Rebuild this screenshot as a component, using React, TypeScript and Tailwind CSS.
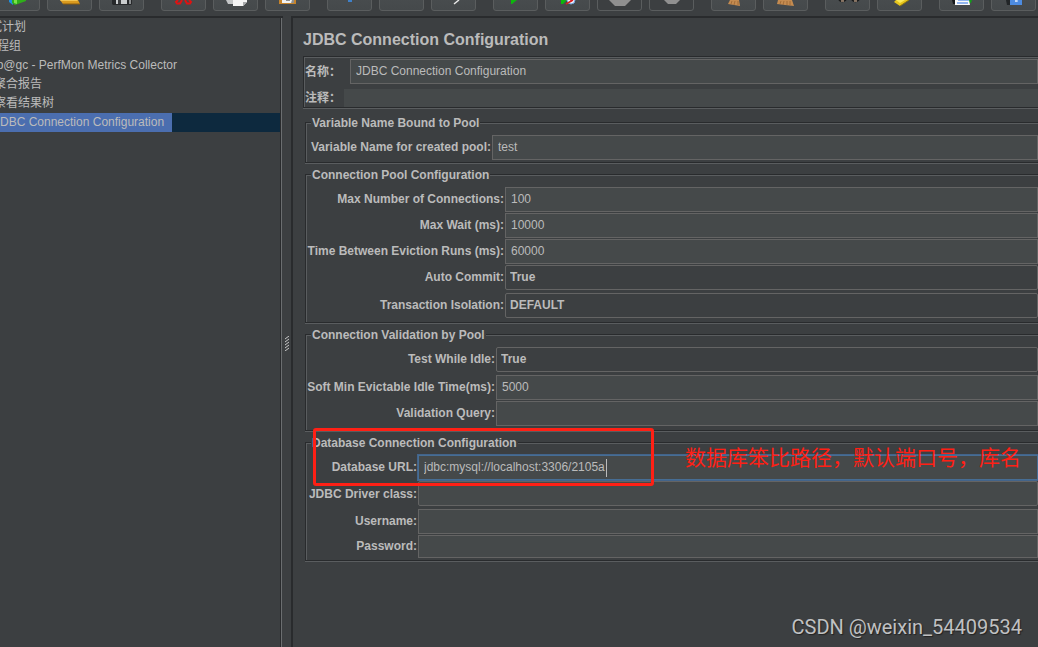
import React from 'react';
import { clsx } from 'clsx';

const FONT = "font-['Liberation_Sans','Noto_Sans_CJK_SC',sans-serif]";
const FIELD = 'w-full border border-[#646464] bg-[#45494a] pb-0.5 pl-[5px] text-[#bbbbbb] outline-none';
const LABEL = 'self-center justify-self-end pb-px whitespace-nowrap font-bold';
const ETCHED = 'border border-r-0 border-[#292b2d] shadow-[inset_1px_1px_0_#5a5d5f,0_1px_0_#5a5d5f]';

interface Tool {
    name: string;
    disabled?: boolean;
    art?: React.ReactNode;
}

const toolGroups: Tool[][] = [
    [
        {
            name: 'Templates',
            art: (
                <>
                    <path d="M13 0h4v5l-4-3z" fill="#1d8fe0" />
                    <path d="M16 0h14v1l-11 4-3-2z" fill="#2fae1a" />
                    <path d="M18 0h3v4l-3-1z" fill="#7be04a" />
                </>
            ),
        },
        {
            name: 'Open',
            art: (
                <>
                    <path d="M12 0h18l2 4H15z" fill="#d99a1e" />
                    <path d="M12 0h17l1 1H13z" fill="#f3c552" />
                    <path d="M15 4h17" stroke="#8a5a0c" />
                </>
            ),
        },
        {
            name: 'Save',
            art: (
                <>
                    <path d="M12 0h20v4l-1 1H13l-1-1z" fill="#26282a" />
                    <path d="M16 0h11v4H16z" fill="#c9cccd" />
                    <path d="M18 0h3v4h-3z" fill="#3a3c3e" />
                    <path d="M29 0h2v4h-2z" fill="#8b8e90" />
                </>
            ),
        },
    ],
    [
        {
            name: 'Cut',
            art: (
                <g fill="none" stroke="#e01212" strokeWidth="2">
                    <path d="M20 0l-2 3.500h-3L14 2l2-2" />
                    <path d="M23 0l2 3.500h3L29 2l-2-2" />
                </g>
            ),
        },
        {
            name: 'Copy',
            art: (
                <>
                    <path d="M12 0h12v4H14z" fill="#c4c6c7" />
                    <path d="M19 0h14v2l-4 4H19z" fill="#f4f4f4" />
                    <path d="M29 6V2h4z" fill="#a9abac" />
                </>
            ),
        },
        {
            name: 'Paste',
            art: (
                <>
                    <path d="M13 0h17v4H13z" fill="#c5832b" />
                    <path d="M16 0h11v3H16z" fill="#f1f1f1" />
                    <path d="M20 0h4v1h-4zM26 0h2v3h-3z" fill="#8d8f90" />
                </>
            ),
        },
    ],
    [
        { name: 'Expand All', art: <path d="M20 0h4v2h-4z" fill="#3f80c8" /> },
        { name: 'Collapse All' },
        { name: 'Toggle', art: <path d="M27 0l-5 4" stroke="#e8e8e8" strokeWidth="1.500" /> },
    ],
    [
        { name: 'Start', art: <path d="M17 0h6l-5 4h-1z" fill="#0cb80c" /> },
        {
            name: 'Start no pauses',
            art: (
                <>
                    <path d="M15 0h6l-4 4h-2z" fill="#0cb80c" />
                    <circle cx="25" cy="0" r="4" fill="#e8f0ff" stroke="#6fa0d8" />
                    <path d="M27 0l-7 4M25 0v2" stroke="#dc1c1c" strokeWidth="1.500" />
                </>
            ),
        },
        { name: 'Stop', disabled: true, art: <path d="M11 0h22l-6 6H17z" fill="#909090" /> },
        { name: 'Shutdown', disabled: true, art: <path d="M14 0h16l-4 4h-8z" fill="#909090" /> },
    ],
    [
        {
            name: 'Clear',
            art: (
                <>
                    <path d="M18 0h9l1 6-12-2z" fill="#c48b50" />
                    <path d="M20 1l-1 3M23 1l-1 4M26 1v4" stroke="#8a5829" strokeOpacity="0.6" />
                </>
            ),
        },
        {
            name: 'Clear All',
            art: (
                <>
                    <path d="M14 0h14l2 6-9-1-8-1z" fill="#c48b50" />
                    <path d="M17 1l-1 3M20 1l-1 4M23 1v4M26 1v4" stroke="#8a5829" strokeOpacity="0.6" />
                </>
            ),
        },
    ],
    [
        {
            name: 'Search',
            art: (
                <g fill="none" strokeWidth="1.500">
                    <path d="M13 0q3 3 7 0M26 0q3 3 7 0" stroke="#1a1a1a" />
                    <path d="M15 1h3M28 1h3" stroke="#a58b76" />
                </g>
            ),
        },
        {
            name: 'Reset Search',
            art: (
                <>
                    <path d="M16 2l6 4 9-6H18z" fill="#e6c51c" />
                    <path d="M18 0h9l-5 3z" fill="#fbea5a" />
                    <path d="M22 6l9-6" stroke="#8e750b" />
                </>
            ),
        },
    ],
    [
        {
            name: 'Function Helper',
            art: (
                <>
                    <path d="M12 0h3v4h-2z" fill="#17191b" />
                    <path d="M27 0h5l-1 3h-4z" fill="#159a1c" />
                    <path d="M15 0h14l1 5H15z" fill="#fafafa" />
                    <path d="M18 0h11M17 3h11" stroke="#2b73e8" />
                </>
            ),
        },
        {
            name: 'Help',
            art: (
                <>
                    <path d="M14 0h4v5h-3z" fill="#222527" />
                    <path d="M18 0h12v5H18z" fill="#4d8be0" />
                    <path d="M24 0v2M23 1h3" stroke="#e7f0ff" />
                </>
            ),
        },
    ],
];

const treeNodes = [
    { label: '测试计划', indent: 'pl-0' },
    { label: '线程组', indent: 'pl-[7px]' },
    { label: 'jp@gc - PerfMon Metrics Collector', indent: 'pl-4' },
    { label: '聚合报告', indent: 'pl-4' },
    { label: '察看结果树', indent: 'pl-4' },
    { label: 'JDBC Connection Configuration', indent: 'pl-4', selected: true },
];

const Toolbar = () => (
    <div className="flex h-4 shrink-0 items-end gap-[17px] overflow-hidden pb-[5px] -ml-[5px]">
        {toolGroups.map((group, i) => (
            <div key={i} className="flex shrink-0 gap-[7px]">
                {group.map((tool) => (
                    <button
                        key={tool.name}
                        aria-label={tool.name}
                        disabled={tool.disabled}
                        className={clsx(
                            'flex h-[22px] w-[45px] items-end rounded-[3px] border border-[#5a5d5e]',
                            tool.disabled ? 'bg-[#3c3f41]' : 'bg-linear-to-b from-[#4a4e50] to-[#45494b]'
                        )}
                    >
                        <svg viewBox="0 0 43 10" className="h-[10px] w-full">
                            {tool.art}
                        </svg>
                    </button>
                ))}
            </div>
        ))}
    </div>
);

const Tree = () => (
    <aside className="w-[283px] shrink-0 overflow-hidden border-t-2 border-[#292b2d]">
        <div className="mr-px h-full border-r border-[#6b6e70]">
            <ul className="h-full overflow-hidden border-r border-[#292b2d]">
                {treeNodes.map((node) => (
                    <li key={node.label} className={clsx('h-[19px]', node.selected && 'bg-[#0d293e]')}>
                        <div className={clsx('-ml-[22px] leading-[19px] whitespace-nowrap', node.indent)}>
                            <span className={clsx('inline-block', node.selected && 'bg-[#4b6eaf] pr-2')}>
                                {node.label}
                            </span>
                        </div>
                    </li>
                ))}
            </ul>
        </div>
    </aside>
);

const Splitter = () => (
    <div className="flex w-2 shrink-0 justify-center pt-80">
        <svg viewBox="0 0 4 15" className="h-[15px] w-1" stroke="#c8c8c8" strokeWidth="1">
            <path d="M0 3l4-3M0 6l4-3M0 9l4-3M0 12l4-3M0 15l4-3" />
        </svg>
    </div>
);

interface GroupProps {
    title: string;
    columns: string;
    className?: string;
    children: React.ReactNode;
}

const Group = ({ title, columns, className = 'pb-0.5', children }: GroupProps) => (
    <fieldset className={clsx('min-w-0 pt-[5px] pl-1', ETCHED, className)}>
        <legend className="ml-px h-[15px] bg-[#3c3f41] px-px leading-[17px] font-bold">{title}</legend>
        <div className={clsx('grid gap-px', columns)}>{children}</div>
    </fieldset>
);

interface RowProps {
    id: string;
    label: string;
    value?: string;
    type?: string;
    className?: string;
}

const TextRow = ({ id, label, value = '', type = 'text', className = 'h-[25px]' }: RowProps) => (
    <>
        <label htmlFor={id} className={LABEL}>{label}</label>
        <input id={id} type={type} defaultValue={value} className={clsx(FIELD, className)} />
    </>
);

const SelectRow = ({ id, label, value }: RowProps) => (
    <>
        <label htmlFor={id} className={clsx('mb-0.5', LABEL)}>{label}</label>
        <select
            id={id}
            className="mb-0.5 h-[25px] w-full appearance-none rounded-xs border border-[#646464] bg-[#3c3f41] pb-0.5 pl-1 font-bold outline-none"
        >
            <option>{value}</option>
        </select>
    </>
);

const ConfigPanel = () => (
    <main className="min-w-0 flex-1 overflow-hidden border-t-2 border-l-2 border-[#292b2d] pl-[10px]">
        <h1 className="pt-[10px] pb-1 text-base leading-6 font-bold">JDBC Connection Configuration</h1>

        <div className={clsx('pt-0.5', ETCHED)}>
            <div className="flex items-center">
                <label htmlFor="name" className="w-[46px] shrink-0 pl-px font-bold">名称：</label>
                <input id="name" defaultValue="JDBC Connection Configuration" className={clsx('h-[25px]', FIELD)} />
            </div>
            <div className="mt-[5px] flex items-center">
                <label htmlFor="comment" className="w-10 shrink-0 pl-px leading-[18px] font-bold">注释：</label>
                <input id="comment" className="h-[18px] w-full bg-[#45494a] outline-none" />
            </div>
        </div>

        <div className="mt-[7px] ml-0.5 flex flex-col gap-1">
            <Group title="Variable Name Bound to Pool" columns="grid-cols-[181px_1fr]">
                <TextRow id="pool" label="Variable Name for created pool:" value="test" />
            </Group>

            <Group title="Connection Pool Configuration" columns="grid-cols-[194px_1fr]">
                <TextRow id="max" label="Max Number of Connections:" value="100" />
                <TextRow id="wait" label="Max Wait (ms):" value="10000" />
                <TextRow id="eviction" label="Time Between Eviction Runs (ms):" value="60000" />
                <SelectRow id="commit" label="Auto Commit:" value="True" />
                <SelectRow id="isolation" label="Transaction Isolation:" value="DEFAULT" />
            </Group>

            <Group title="Connection Validation by Pool" columns="grid-cols-[185px_1fr]" className="pb-1">
                <SelectRow id="idle" label="Test While Idle:" value="True" />
                <TextRow id="evictable" label="Soft Min Evictable Idle Time(ms):" value="5000" />
                <TextRow id="query" label="Validation Query:" />
            </Group>

            <div className="relative">
                <Group title="Database Connection Configuration" columns="grid-cols-[107px_1fr]">
                    <label htmlFor="url" className={LABEL}>Database URL:</label>
                    <div className="relative">
                        <input
                            id="url"
                            defaultValue="jdbc:mysql://localhost:3306/2105a"
                            className="block h-[25px] w-full border border-[#466d94] bg-[#45494a] pb-0.5 pl-[5px] shadow-[0_0_0_1px_#43648a] outline-none"
                        />
                        <span className="absolute top-1 left-[188px] h-[18px] w-px bg-[#bbbbbb]" />
                    </div>
                    <TextRow id="driver" label="JDBC Driver class:" className="mb-0.5 h-[25px] rounded-xs" />
                    <TextRow id="user" label="Username:" />
                    <TextRow id="password" label="Password:" type="password" className="h-[23px]" />
                </Group>
                {/* callout around the URL row */}
                <div className="pointer-events-none absolute -top-[7px] left-2 h-[58px] w-[341px] rounded-[3px] border-3 border-[#ff2015]" />
                <p className="pointer-events-none absolute top-[9px] left-[380px] text-[21px] leading-6 whitespace-nowrap text-[#ff2015] font-['Noto_Sans_CJK_SC',sans-serif]">
                    数据库笨比路径，默认端口号，库名
                </p>
            </div>
        </div>
    </main>
);

export default function App() {
    return (
        <div className={clsx('relative flex h-screen flex-col overflow-hidden bg-[#3c3f41] text-xs text-[#bbbbbb]', FONT)}>
            <Toolbar />
            <div className="flex min-h-0 flex-1">
                <Tree />
                <Splitter />
                <ConfigPanel />
            </div>
            <div className="absolute right-4 bottom-2 text-xl leading-6 text-[#c0c1c2] [text-shadow:1px_1px_1px_#222] font-[Roboto,sans-serif]">
                CSDN @weixin_54409534
            </div>
        </div>
    );
}
